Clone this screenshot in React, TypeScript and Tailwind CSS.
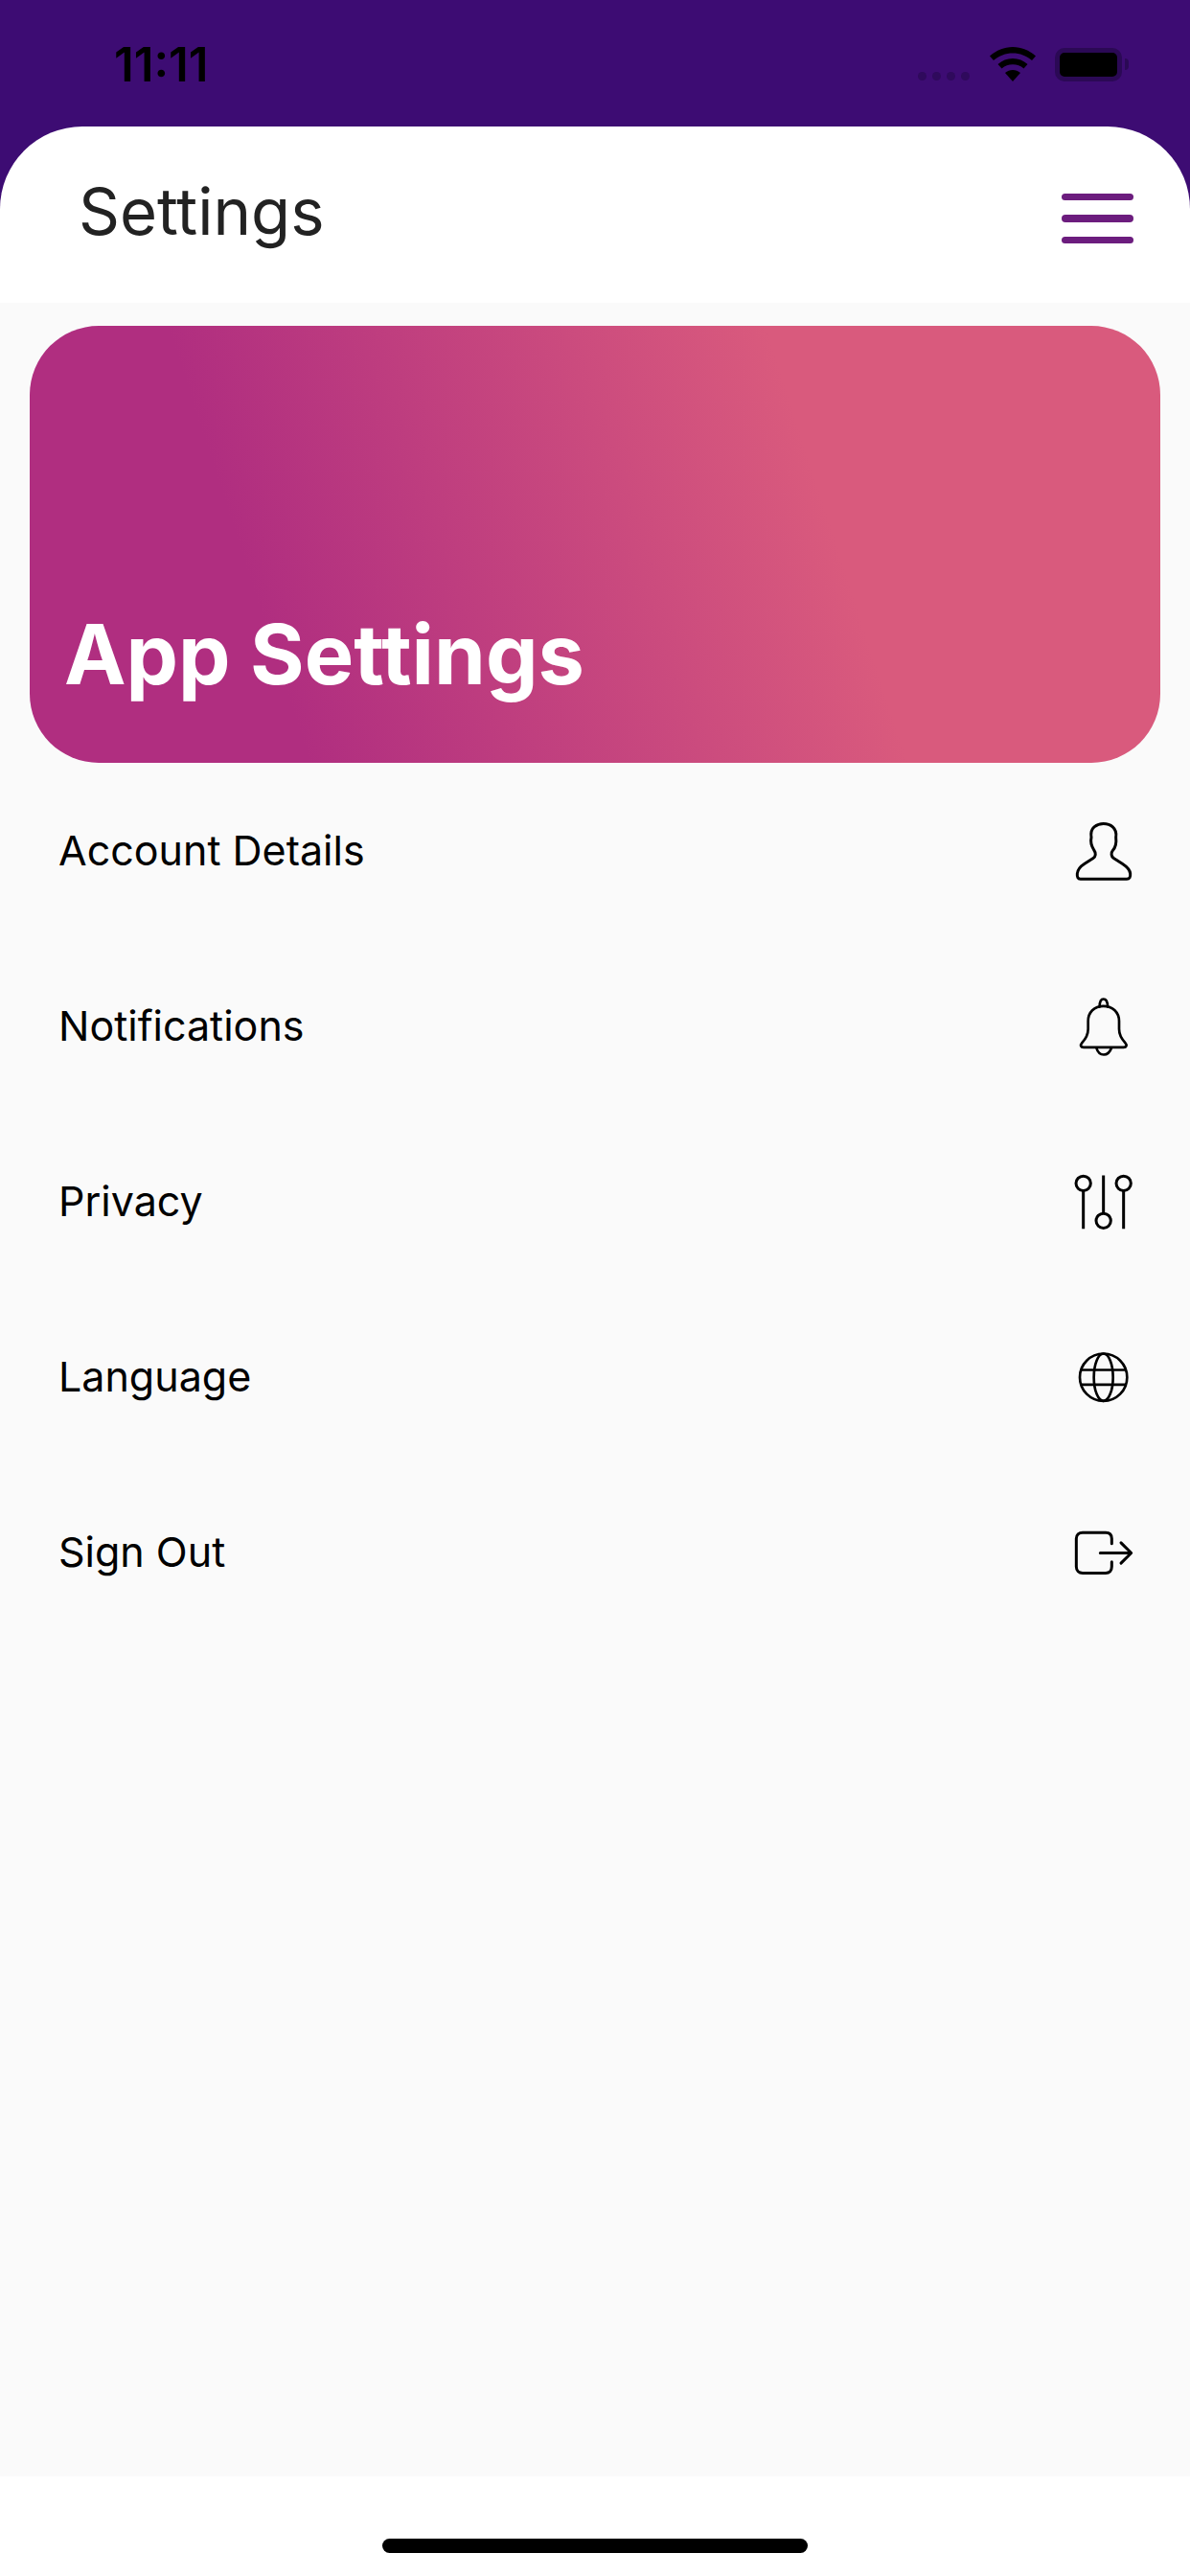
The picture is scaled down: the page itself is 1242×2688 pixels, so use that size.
import React from "react";

function PersonIcon() {
  return (
    <svg viewBox="81 37.5 210 210" className="w-[70px] h-[70px]" fill="none" stroke="black" strokeWidth="9" strokeLinecap="round" strokeLinejoin="round">
      <path d="M113 230H258C267 230 270 224 269 213C268 201 258 191 244 182L217 165C209 160 208 148 214 141C224 130 226 116 224 100C226 88 224 76 214 67C204 58 194 57 185 57C176 57 165 60 156 67C147 75 145 88 147 100C143 116 149 130 156 141C162 149 161 160 153 165L126 182C112 191 104 201 103 213C102 224 105 230 113 230Z" />
    </svg>
  );
}

function BellIcon() {
  return (
    <svg viewBox="81 46.5 210 210" className="w-[70px] h-[70px]" fill="none" stroke="black" strokeWidth="8" strokeLinecap="round" strokeLinejoin="round">
      <path d="M173 90C173 72 179 66 185 66C191 66 198 72 198 90" />
      <path d="M185 88C156 88 137 108 137 135V160C137 178 130 190 118 203C111 211 114 217 123 217H248C257 217 260 211 253 203C241 190 234 178 234 160V135C234 108 214 88 185 88Z" />
      <path d="M163 219C167 233 175 240 186 240C197 240 205 233 210 219" />
    </svg>
  );
}

function SlidersIcon() {
  return (
    <svg viewBox="81 85.5 210 210" className="w-[70px] h-[70px]" fill="none" stroke="black" strokeWidth="9">
      <circle cx="122" cy="133" r="23" />
      <circle cx="185" cy="250" r="23" />
      <circle cx="248" cy="133" r="23" />
      <path d="M122 156V275M185 108V227M248 156V275" />
    </svg>
  );
}

function GlobeIcon() {
  return (
    <svg viewBox="81 94.5 210 210" className="w-[70px] h-[70px]" fill="none" stroke="black" strokeWidth="8">
      <circle cx="185" cy="200" r="74" />
      <ellipse cx="185" cy="200" rx="30" ry="74" />
      <path d="M116 177H254M116 223H254" />
    </svg>
  );
}

function SignOutIcon() {
  return (
    <svg viewBox="81 103.5 210 210" className="w-[70px] h-[70px]" fill="none" stroke="black" strokeWidth="9" strokeLinecap="round" strokeLinejoin="round">
      <path d="M211 181V165C211 153 204 146 192 146H120C108 146 100 153 100 165V253C100 265 108 273 120 273H192C204 273 211 265 211 253V238" />
      <path d="M175 210H271M240 178L272 210L240 242" />
    </svg>
  );
}

const rows = [
  { label: "Account Details", icon: <PersonIcon /> },
  { label: "Notifications", icon: <BellIcon /> },
  { label: "Privacy", icon: <SlidersIcon /> },
  { label: "Language", icon: <GlobeIcon /> },
  { label: "Sign Out", icon: <SignOutIcon /> },
];

function StatusBar() {
  return (
    <div className="h-[132px] flex items-start justify-between pl-[119px] pr-[64px] pt-[35px]">
      <span className="text-[49px] leading-[66px] font-semibold text-black">11:11</span>
      <div className="flex items-start pt-[14px]">
        <div className="flex gap-[6px] mt-[26px] mr-[21px]">
          <div className="w-[9px] h-[9px] rounded-full bg-[#2f0a5c]" />
          <div className="w-[9px] h-[9px] rounded-full bg-[#2f0a5c]" />
          <div className="w-[9px] h-[9px] rounded-full bg-[#2f0a5c]" />
          <div className="w-[9px] h-[9px] rounded-full bg-[#2f0a5c]" />
        </div>
        <svg viewBox="0 0 48 36" className="w-[48px] h-[36px]" fill="black">
          <path d="M24 0C33 0 41 3.500 48 9.500L44 14C38 9 31.500 6.500 24 6.500C16.500 6.500 10 9 4 14L0 9.500C7 3.500 15 0 24 0Z" />
          <path d="M24 12C30 12 35 14 39.500 18L35.500 22.500C32 19.500 28.500 18.300 24 18.300C19.500 18.300 16 19.500 12.500 22.500L8.500 18C13 14 18 12 24 12Z" />
          <path d="M24 24C27 24 29.500 25 32 27L24 36L16 27C18.500 25 21 24 24 24Z" />
        </svg>
        <div className="ml-[20px] mt-[1px] w-[70px] h-[35px] rounded-[10px] border-[5px] border-[#2b0955] bg-black" />
        <div className="ml-[3px] mt-[12px] w-[4px] h-[12px] rounded-r-full bg-[#2b0955]" />
      </div>
    </div>
  );
}

export default function App() {
  return (
    <div className="w-[1242px] h-[2688px] flex flex-col bg-[#3d0c73] font-[Inter,sans-serif]">
      <StatusBar />
      <header className="h-[184px] bg-white rounded-t-[86px] flex items-center justify-between pl-[82px] pr-[59px] shrink-0">
        <h1 className="text-[67px] leading-[80px] font-normal text-[#222222] mt-[-6px]">Settings</h1>
        <div className="flex flex-col gap-[15px] w-[75px] mt-[8px]">
          <div className="h-[7.5px] rounded-full bg-[#6c1d7e]" />
          <div className="h-[7.5px] rounded-full bg-[#6c1d7e]" />
          <div className="h-[7.5px] rounded-full bg-[#6c1d7e]" />
        </div>
      </header>
      <main className="flex-1 bg-[#fafafa] pt-[24px]">
        <div className="mx-[31px] h-[456px] rounded-[72px] bg-[linear-gradient(72deg,#b02e80_22%,#d95a7d_69%)] flex items-end pl-[36px] pb-[63px]">
          <h2 className="text-[86.5px] leading-[100px] font-bold text-white">App Settings</h2>
        </div>
        <ul>
          {rows.map((row) => (
            <li key={row.label} className="h-[183px] flex items-center justify-between pl-[61px] pr-[55px]">
              <span className="text-[43px] text-black">{row.label}</span>
              {row.icon}
            </li>
          ))}
        </ul>
      </main>
      <footer className="h-[104px] bg-white flex justify-center pt-[65px] shrink-0">
        <div className="w-[444px] h-[15px] rounded-full bg-black" />
      </footer>
    </div>
  );
}
